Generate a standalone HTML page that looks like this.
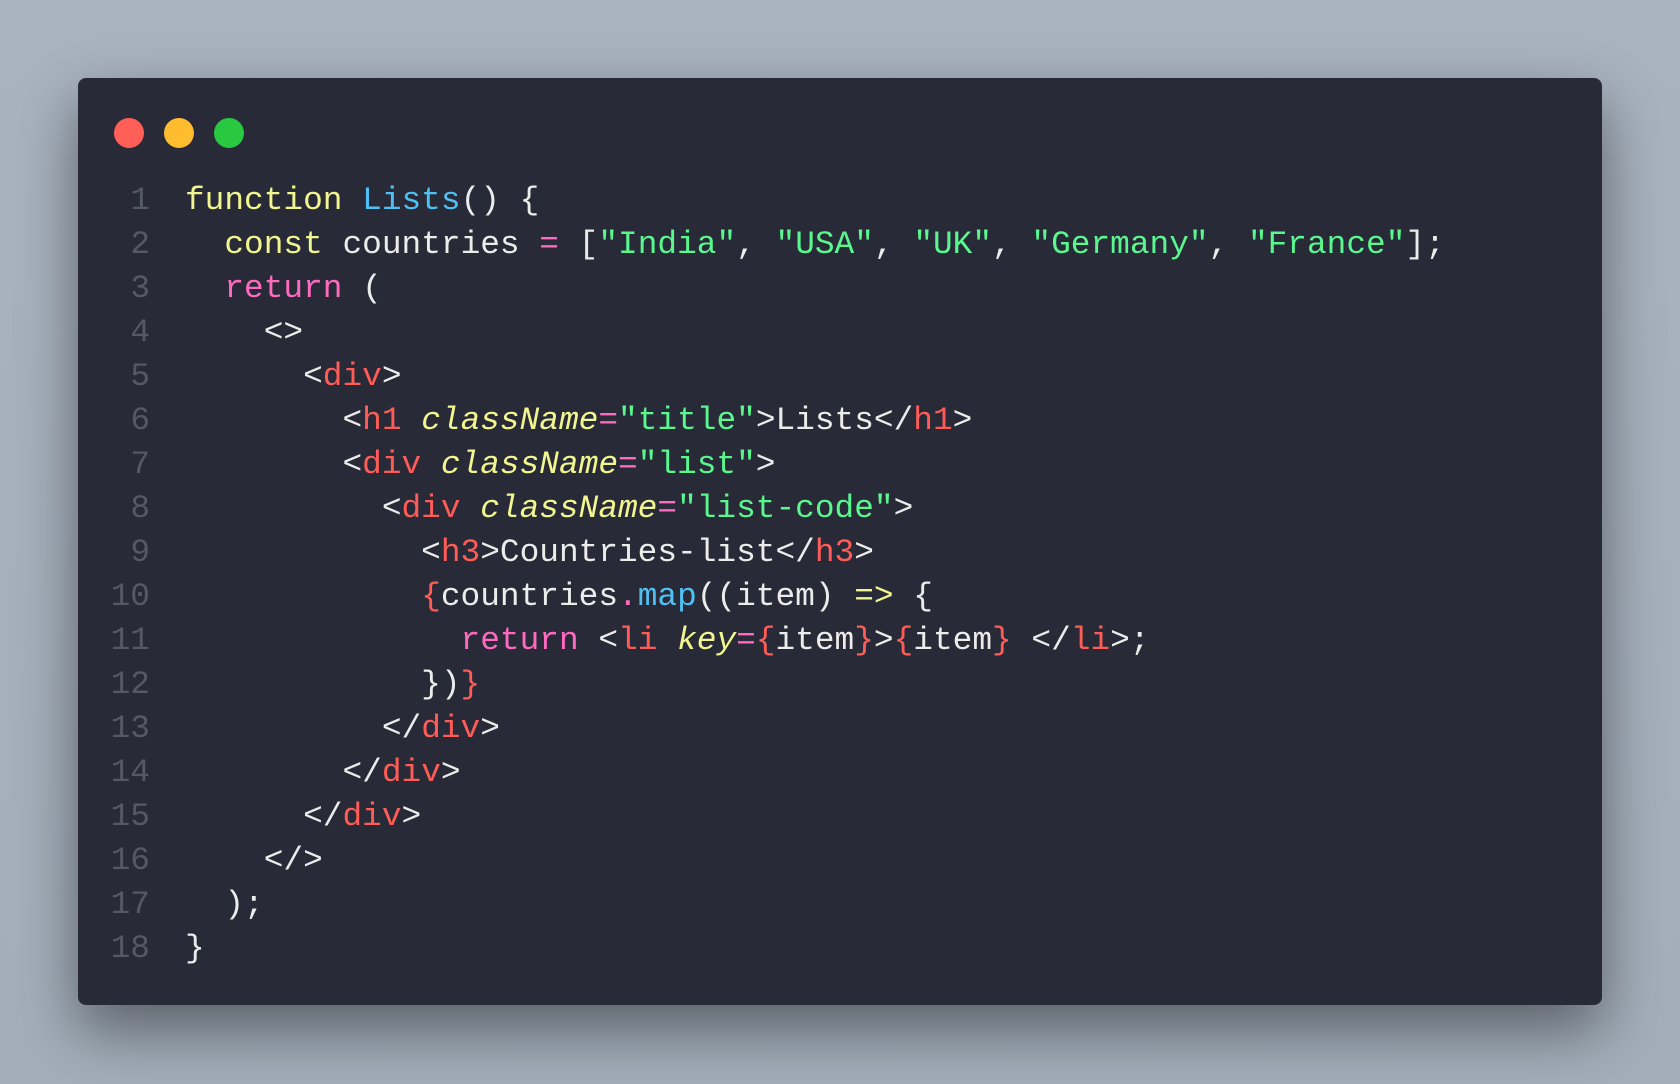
<!DOCTYPE html>
<html><head><meta charset="utf-8"><style>
html,body{margin:0;padding:0}
body{width:1680px;height:1084px;background:linear-gradient(180deg,#a9b3bf,#a3aeba);position:relative;overflow:hidden}
.win{position:absolute;left:78px;top:78px;width:1524px;height:927px;background:#282a37;border-radius:8px;box-shadow:0 25px 60px rgba(0,0,0,.45)}
.dot{position:absolute;top:118px;width:30px;height:30px;border-radius:50%}
pre{position:absolute;left:0;top:179px;margin:0;font-family:"Liberation Mono",monospace;font-size:32.8px;line-height:44px;color:#ececea}
.n{display:inline-block;width:150px;text-align:right;padding-right:35px;color:#555965}
.k{color:#f1f68e}.f{color:#4fc0f4}.p{color:#ff6ac1}.s{color:#5af78e}.t{color:#ff5c57}.a{color:#f1f68e;font-style:italic}
</style></head><body>
<div class="win"></div>
<div class="dot" style="left:114px;background:#ff5f57"></div>
<div class="dot" style="left:164px;background:#febc2e"></div>
<div class="dot" style="left:214px;background:#28c840"></div>
<pre><span class="n">1</span><span class="k">function</span> <span class="f">Lists</span>() {
<span class="n">2</span>  <span class="k">const</span> countries <span class="p">=</span> [<span class="s">"India"</span>, <span class="s">"USA"</span>, <span class="s">"UK"</span>, <span class="s">"Germany"</span>, <span class="s">"France"</span>];
<span class="n">3</span>  <span class="p">return</span> (
<span class="n">4</span>    &lt;&gt;
<span class="n">5</span>      &lt;<span class="t">div</span>&gt;
<span class="n">6</span>        &lt;<span class="t">h1</span> <span class="a">className</span><span class="p">=</span><span class="s">"title"</span>&gt;Lists&lt;/<span class="t">h1</span>&gt;
<span class="n">7</span>        &lt;<span class="t">div</span> <span class="a">className</span><span class="p">=</span><span class="s">"list"</span>&gt;
<span class="n">8</span>          &lt;<span class="t">div</span> <span class="a">className</span><span class="p">=</span><span class="s">"list-code"</span>&gt;
<span class="n">9</span>            &lt;<span class="t">h3</span>&gt;Countries-list&lt;/<span class="t">h3</span>&gt;
<span class="n">10</span>            <span class="t">{</span>countries<span class="p">.</span><span class="f">map</span>((item) <span class="k">=&gt;</span> {
<span class="n">11</span>              <span class="p">return</span> &lt;<span class="t">li</span> <span class="a">key</span><span class="p">=</span><span class="t">{</span>item<span class="t">}</span>&gt;<span class="t">{</span>item<span class="t">}</span> &lt;/<span class="t">li</span>&gt;;
<span class="n">12</span>            })<span class="t">}</span>
<span class="n">13</span>          &lt;/<span class="t">div</span>&gt;
<span class="n">14</span>        &lt;/<span class="t">div</span>&gt;
<span class="n">15</span>      &lt;/<span class="t">div</span>&gt;
<span class="n">16</span>    &lt;/&gt;
<span class="n">17</span>  );
<span class="n">18</span>}</pre>
</body></html>
